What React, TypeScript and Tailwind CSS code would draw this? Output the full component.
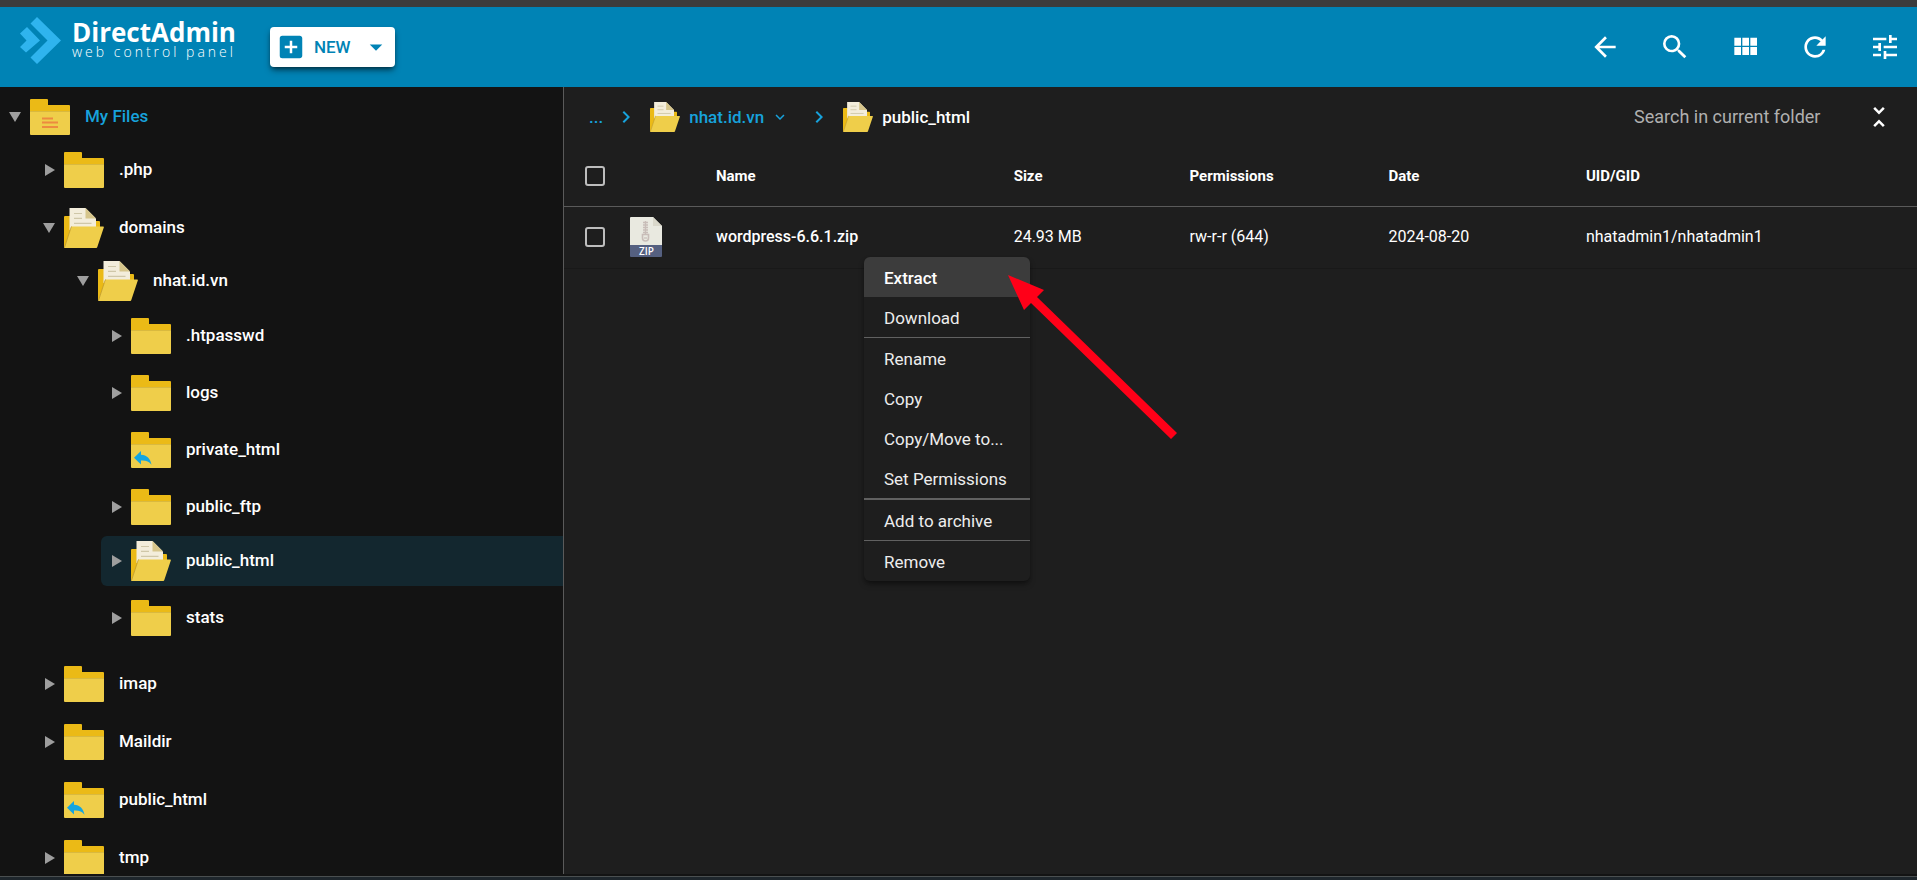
import { useState } from "react";
import {
  MdAddBox,
  MdArrowBack,
  MdArrowDropDown,
  MdChevronRight,
  MdExpandMore,
  MdRefresh,
  MdSearch,
  MdTune,
  MdUnfoldLess,
} from "react-icons/md";

type Kind = "home" | "folder" | "open" | "link";

interface TreeNode {
  id: string;
  label: string;
  kind: Kind;
  arrow?: "right" | "down";
  children?: TreeNode[];
}

const TREE: TreeNode[] = [
  { id: "php", label: ".php", kind: "folder", arrow: "right" },
  {
    id: "domains",
    label: "domains",
    kind: "open",
    arrow: "down",
    children: [
      {
        id: "nhat",
        label: "nhat.id.vn",
        kind: "open",
        arrow: "down",
        children: [
          { id: "htpasswd", label: ".htpasswd", kind: "folder", arrow: "right" },
          { id: "logs", label: "logs", kind: "folder", arrow: "right" },
          { id: "private", label: "private_html", kind: "link" },
          { id: "ftp", label: "public_ftp", kind: "folder", arrow: "right" },
          { id: "public", label: "public_html", kind: "open", arrow: "right" },
          { id: "stats", label: "stats", kind: "folder", arrow: "right" },
        ],
      },
    ],
  },
  { id: "imap", label: "imap", kind: "folder", arrow: "right" },
  { id: "maildir", label: "Maildir", kind: "folder", arrow: "right" },
  { id: "public-link", label: "public_html", kind: "link" },
  { id: "tmp", label: "tmp", kind: "folder", arrow: "right" },
];

const MENU_GROUPS = [
  { items: ["Extract", "Download"], border: "border-b" },
  { items: ["Rename", "Copy", "Copy/Move to...", "Set Permissions"], border: "border-b-2" },
  { items: ["Add to archive"], border: "border-b" },
  { items: ["Remove"], border: "" },
];

function FolderIcon({ kind }: { kind: Kind }) {
  return (
    <svg viewBox="0 0 40 36" className="w-10 h-9 shrink-0" aria-hidden="true">
      <path d="M1 0h16q1 0 1 1v5h21q1 0 1 1v8H0V1q0-1 1-1z" fill="#ebba16" />
      <path d="M0 12h40v23q0 1-1 1H1q-1 0-1-1z" fill="#efce4a" />
      <path d="M0 12.5h40" stroke="#d3b43c" strokeWidth="0.8" />
      {kind === "home" && (
        <path d="M12 19.5h11M12 23.5h16M12 28h16" stroke="#ed8a3f" strokeWidth="1.8" />
      )}
      {kind === "link" && (
        <path d="M3 25.700L10 19v3.700c6 .3 9.300 3.800 10.500 10-2.500-3.200-5.500-4.500-10.500-4.200v4.100z" fill="#14a5e0" />
      )}
    </svg>
  );
}

function OpenFolderIcon({ className }: { className: string }) {
  return (
    <svg viewBox="0 0 40 40" className={`shrink-0 ${className}`} aria-hidden="true">
      <path d="M0 39V9q0-1 1-1h8v5h26q1 0 1 1v8L8 38z" fill="#ebba16" />
      <path d="M5.500 0h16L32 10.500V22H5.500z" fill="#f3eddb" />
      <path d="M21.500 0L32 10.500H21.500z" fill="#d6c58b" />
      <path d="M10 5.500h8M10 10.300h8M10 15.300h17.500" stroke="#cfc7a8" strokeWidth="1.2" />
      <path d="M8 18.500h31.200q.9 0 .6 1L33.300 39q-.3 1-1 1H0L7 19.500q.3-1 1-1z" fill="#efce4a" />
      <path d="M.5 39.500L7 19.500q.3-1 1-1" fill="none" stroke="#b8942a" strokeWidth="0.7" />
    </svg>
  );
}

function ZipIcon() {
  return (
    <svg viewBox="0 0 32 40" className="w-8 h-10" aria-hidden="true">
      <path d="M1 0h22l9 9v20H0V1q0-1 1-1z" fill="#e9e9e0" />
      <path d="M23 0l9 9h-9z" fill="#d9d7ca" />
      <path d="M0 28h32v11q0 1-1 1H1q-1 0-1-1z" fill="#556080" />
      <path d="M15.500 4v13M13 5.500h5M13 8h5M13 10.500h5M13 13h5M13 15.500h5" stroke="#c8bdb8" strokeWidth="1.400" />
      <path d="M12.500 17.500h6v3.500a3 3 0 0 1-6 0z" fill="none" stroke="#c8bdb8" strokeWidth="1.600" />
      <path d="M14 21h3" stroke="#c8bdb8" strokeWidth="1.200" />
      <text x="16.500" y="37.500" textAnchor="middle" fontSize="10" fontWeight="600" fill="#fff" fontFamily="Open Sans, sans-serif">ZIP</text>
    </svg>
  );
}

function Caret({ dir }: { dir?: "right" | "down" }) {
  return (
    <svg viewBox="0 0 12 12" className="w-3 h-3 shrink-0" fill="#9e9e9e" aria-hidden="true">
      {dir === "right" && <path d="M2 0l10 6-10 6z" />}
      {dir === "down" && <path d="M0 1h12L6 11z" />}
    </svg>
  );
}

function Row({ node, selected, onSelect }: { node: TreeNode; selected: boolean; onSelect: (id: string) => void }) {
  return (
    <button
      type="button"
      onClick={() => onSelect(node.id)}
      className={`w-full flex items-center pl-[9px] rounded-l-md text-left ${selected ? "h-[50px] bg-[#13272f]" : "h-[53px] pt-0.5"}`}
    >
      <Caret dir={node.arrow} />
      <span className="ml-[9px] flex">
        {node.kind === "open" ? <OpenFolderIcon className="w-10 h-10" /> : <FolderIcon kind={node.kind} />}
      </span>
      <span className={`ml-[15px] pb-0.5 font-medium ${node.kind === "home" ? "text-[#17a2dc]" : "text-white"}`}>{node.label}</span>
    </button>
  );
}

function Branch({ nodes, depth, selected, onSelect }: { nodes: TreeNode[]; depth: number; selected: string; onSelect: (id: string) => void }) {
  return (
    <ul className={`flex flex-col ${depth === 0 ? "gap-[5px]" : "gap-1"} ${depth === 1 ? "pb-2" : ""} ${depth === 2 ? "pl-[33px] pt-0.5" : "pl-[34px]"}`}>
      {nodes.map((node) => (
        <li key={node.id}>
          <Row node={node} selected={selected === node.id} onSelect={onSelect} />
          {node.children && <Branch nodes={node.children} depth={depth + 1} selected={selected} onSelect={onSelect} />}
        </li>
      ))}
    </ul>
  );
}

function Logo() {
  return (
    <a href="#" className="flex items-center mb-3.5" aria-label="DirectAdmin web control panel">
      <svg viewBox="0 0 42 48" className="w-[42px] h-12 shrink-0" fill="#2fb4ee" aria-hidden="true">
        <path d="M17 1l24 23.500L17 48l-6.500-6.500 17-17-17-17z" />
        <path d="M7 11l13 13.500L6 36.500 0 31l6.500-6.500L0 17.500z" />
      </svg>
      <span className="ml-2.5 flex flex-col text-white">
        <span className="font-['Open_Sans',sans-serif] text-[26px] leading-6 font-bold">DirectAdmin</span>
        <span className="font-['Open_Sans',sans-serif] text-sm leading-4 font-light tracking-[3px]">web control panel</span>
      </span>
    </a>
  );
}

function Header() {
  return (
    <header className="h-20 shrink-0 bg-[#0083b5] flex items-center justify-between pl-5 pr-4 pb-px">
      <div className="flex items-center">
        <Logo />
        <button type="button" className="ml-[34px] h-10 w-[125px] flex items-center bg-white rounded shadow-md shadow-black/50 text-[#0083b5] font-medium pl-1.5">
          <MdAddBox size={30} />
          <span className="ml-2">NEW</span>
          <MdArrowDropDown size={30} className="ml-2.5" />
        </button>
      </div>
      <nav className="flex items-center gap-[38px] text-white">
        <button type="button" aria-label="Back"><MdArrowBack size={32} /></button>
        <button type="button" aria-label="Search"><MdSearch size={32} /></button>
        <button type="button" aria-label="Grid view">
          <svg viewBox="0 0 24 24" className="w-8 h-8" fill="currentColor">
            <path d="M4 11h5V5H4v6zm0 7h5v-6H4v6zm6 0h5v-6h-5v6zm6 0h5v-6h-5v6zm-6-7h5V5h-5v6zm6-6v6h5V5h-5z" />
          </svg>
        </button>
        <button type="button" aria-label="Refresh"><MdRefresh size={32} /></button>
        <button type="button" aria-label="Settings"><MdTune size={32} /></button>
      </nav>
    </header>
  );
}

function Breadcrumbs() {
  return (
    <div className="h-[60px] flex items-center justify-between pl-[25px] pr-[23px]">
      <nav className="flex items-center text-[#17a2dc] font-medium">
        <a href="#">...</a>
        <MdChevronRight size={24} className="ml-[11px]" />
        <OpenFolderIcon className="w-[30px] h-[30px] ml-3" />
        <a href="#" className="ml-[9px]">nhat.id.vn</a>
        <MdExpandMore size={18} className="ml-[7px]" />
        <MdChevronRight size={24} className="ml-[18px]" />
        <OpenFolderIcon className="w-[30px] h-[30px] ml-3" />
        <span className="ml-[9px] text-white">public_html</span>
      </nav>
      <div className="flex items-center text-white">
        <input
          type="search"
          aria-label="Search in current folder"
          placeholder="Search in current folder"
          className="w-[230px] bg-transparent text-lg placeholder:text-[#b0b0b0] focus:outline-none"
        />
        <button type="button" aria-label="Collapse"><MdUnfoldLess size={30} /></button>
      </div>
    </div>
  );
}

function Checkbox({ label }: { label: string }) {
  return (
    <input
      type="checkbox"
      aria-label={label}
      className="appearance-none block w-5 h-5 border-2 border-[#bdbdbd] rounded-[3px] checked:bg-[#17a2dc]"
    />
  );
}

function FileTable() {
  return (
    <table className="w-full table-fixed text-left text-white border-collapse">
      <thead>
        <tr className="h-[59px] border-b border-[#5a5a5a] text-[15px]">
          <th className="w-[66px] pl-[21px]"><Checkbox label="Select all" /></th>
          <th className="w-[86px]"></th>
          <th className="w-[22%] font-bold">Name</th>
          <th className="w-[13%] font-bold">Size</th>
          <th className="w-[14.7%] font-bold">Permissions</th>
          <th className="w-[14.6%] font-bold">Date</th>
          <th className="font-bold">UID/GID</th>
        </tr>
      </thead>
      <tbody>
        <tr className="h-[62px] border-b border-[#191919] text-base">
          <td className="pl-[21px]"><Checkbox label="Select wordpress-6.6.1.zip" /></td>
          <td><ZipIcon /></td>
          <td className="font-medium">wordpress-6.6.1.zip</td>
          <td>24.93 MB</td>
          <td>rw-r-r (644)</td>
          <td>2024-08-20</td>
          <td>nhatadmin1/nhatadmin1</td>
        </tr>
      </tbody>
    </table>
  );
}

function ContextMenu() {
  return (
    <div role="menu" className="absolute left-[300px] top-[170px] w-[166px] rounded-md bg-[#1e1e1e] shadow-md shadow-black/40 overflow-hidden">
      {MENU_GROUPS.map((group) => (
        <div key={group.items[0]} className={`border-[#616161] ${group.border}`}>
          {group.items.map((item) => (
            <button
              key={item}
              type="button"
              role="menuitem"
              className={`block w-full h-10 pt-0.5 pl-5 text-left whitespace-nowrap ${item === "Extract" ? "bg-[#3c3c3c] text-white font-medium" : "text-[#ededed]"}`}
            >
              {item}
            </button>
          ))}
        </div>
      ))}
    </div>
  );
}

export default function App() {
  const [selected, setSelected] = useState("public");

  return (
    <div className="h-screen flex flex-col bg-[#131313] font-['Roboto',sans-serif] text-[17px] leading-6 overflow-hidden">
      <div className="h-[7px] shrink-0 bg-[#3c3c3c]" />
      <Header />
      <div className="flex-1 min-h-0 flex">
        <aside className="w-[564px] shrink-0 border-r border-[#5a5a5a] bg-[#131313] overflow-hidden pt-0.5">
          <Row node={{ id: "home", label: "My Files", kind: "home", arrow: "down" }} selected={false} onSelect={setSelected} />
          <Branch nodes={TREE} depth={0} selected={selected} onSelect={setSelected} />
        </aside>
        <main className="relative flex-1 min-w-0 bg-[#1e1e1e]">
          <Breadcrumbs />
          <FileTable />
          <ContextMenu />
          {/* Pointer to the Extract action */}
          <svg viewBox="0 0 170 166" className="absolute left-[444px] top-[187px] w-[170px] h-[166px] pointer-events-none" aria-hidden="true">
            <path d="M0 1L36 16l-7 7 140 136-6 6L23 29l-7 7z" fill="#ff0018" />
          </svg>
        </main>
      </div>
      <footer className="mt-0.5 h-1 shrink-0 border-t border-[#4a4f50] bg-[#1e262c]" />
    </div>
  );
}
